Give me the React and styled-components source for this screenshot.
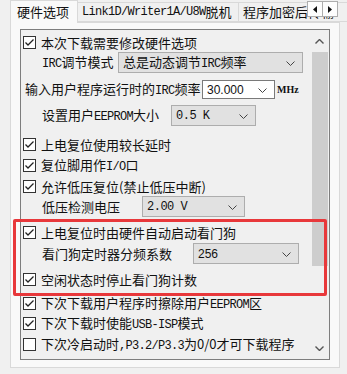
import React from "react";
import styled, { createGlobalStyle } from "styled-components";

const GlobalStyle = createGlobalStyle`
  html, body { margin: 0; padding: 0; background: #f0f0f0; }
  * { box-sizing: border-box; }
`;

const FONT = `"Noto Sans CJK SC", "Liberation Serif", sans-serif`;

const Root = styled.div`
  position: relative;
  width: 347px;
  height: 374px;
  overflow: hidden;
  background: #f0f0f0;
  font-family: ${FONT};
  font-size: 13px;
  color: #111;
`;

/* half-width Latin run, like the bitmap font's Latin glyphs */
const L = styled.span`
  font-family: "Liberation Mono", monospace;
  font-size: 12px;
  letter-spacing: -0.7px;
`;

const TabStrip = styled.div`
  position: relative;
  display: flex;
  align-items: flex-end;
  height: 22px;
  padding-left: 10px;
  white-space: nowrap;
`;

const Tab = styled.div`
  position: relative;
  flex-shrink: 0;
  height: ${(p) => (p.$active ? 23 : 20)}px;
  margin-bottom: ${(p) => (p.$active ? -1 : 0)}px;
  width: ${(p) => p.$w}px;
  margin-left: ${(p) => (p.$first ? 0 : -1)}px;
  padding-left: ${(p) => p.$pad}px;
  padding-bottom: ${(p) => (p.$active ? 1 : 0)}px;
  display: flex;
  align-items: center;
  border: 1px solid #d9d9d9;
  border-bottom: ${(p) => (p.$active ? "none" : "1px solid #d9d9d9")};
  background: ${(p) => (p.$active ? "#f9f9f9" : "#f0f0f0")};
  z-index: ${(p) => (p.$active ? 2 : 1)};
  line-height: 16px;
  overflow: hidden;
`;

const TabScroller = styled.div`
  position: absolute;
  right: 9px;
  top: 1px;
  display: flex;
  z-index: 3;
`;

const ScrollBtn = styled.div`
  width: 16px;
  height: 16px;
  margin-left: -1px;
  border: 1px solid #adadad;
  background: #fdfdfd;
  display: flex;
  align-items: center;
  justify-content: center;
`;

const TabPage = styled.div`
  position: relative;
  z-index: 1;
  margin-left: 10px;
  width: 330px;
  height: 346px;
  border: 1px solid #d9d9d9;
  background: #f9f9f9;
  padding: 6px 0 0 9px;
`;

const ListBox = styled.div`
  display: flex;
  width: 310px;
  height: 331px;
  border: 1px solid #7d7d7d;
  background: #f0f0f0;
  overflow: hidden;
`;

const Content = styled.div`
  flex: 1;
  min-width: 0;
  padding-top: 2px;
  display: flex;
  flex-direction: column;
`;

const Row = styled.div`
  display: flex;
  align-items: center;
  flex-shrink: 0;
  height: ${(p) => p.$h || 20}px;
  margin-top: ${(p) => p.$mt || 0}px;
  padding-left: ${(p) => p.$indent || 0}px;
  white-space: nowrap;
`;

const Box = styled.span`
  width: 13px;
  height: 13px;
  flex-shrink: 0;
  border: 1px solid #333;
  background: #fff;
  display: flex;
  align-items: center;
  justify-content: center;
  margin-right: 5px;
`;

const Label = styled.span`
  flex-shrink: 0;
  width: ${(p) => (p.$w ? `${p.$w}px` : "auto")};
  line-height: 20px;
  padding-top: 1px;
`;

const Select = styled.div`
  flex-shrink: 0;
  position: relative;
  display: flex;
  align-items: center;
  width: ${(p) => p.$w}px;
  height: ${(p) => p.$h || 21}px;
  padding-left: 4px;
  border: 1px solid ${(p) => (p.$edit ? "#7a7a7a" : "#adadad")};
  background: ${(p) => (p.$edit ? "#ffffff" : "#e1e1e1")};
  font-family: ${(p) =>
    p.$kind === "mono"
      ? `"Liberation Mono", monospace`
      : p.$kind === "sans"
      ? `"Liberation Sans", Arial, sans-serif`
      : FONT};
  font-size: ${(p) => (p.$kind === "mono" || p.$kind === "sans" ? 12 : 13)}px;
  letter-spacing: ${(p) => (p.$kind === "mono" ? "-0.5px" : "0")};
  line-height: 18px;
`;

const Chevron = styled.svg`
  position: absolute;
  right: 7px;
  top: 50%;
  margin-top: -2px;
`;

const Unit = styled.span`
  margin-left: 2px;
  font-family: "Liberation Serif", serif;
  font-weight: bold;
  font-size: 10px;
`;

const Scrollbar = styled.div`
  width: 19px;
  flex-shrink: 0;
  display: flex;
  flex-direction: column;
  align-items: center;
  background: #f0f0f0;
`;

const ScrollArrow = styled.div`
  height: ${(p) => p.$h}px;
  width: 100%;
  display: flex;
  align-items: center;
  justify-content: center;
`;

const Thumb = styled.div`
  width: 16px;
  height: 214px;
  background: #cdcdcd;
`;

const Spacer = styled.div`
  flex: 1;
`;

const Highlight = styled.div`
  position: absolute;
  left: 13px;
  top: 219px;
  width: 314px;
  height: 77px;
  border: 3px solid #e8383b;
  border-radius: 2px;
  z-index: 5;
  pointer-events: none;
`;

const Check = ({ checked }) => (
  <Box>
    {checked && (
      <svg width="11" height="11" viewBox="0 0 11 11">
        <path d="M1.5 5.5 L4 8 L9.5 2.5" fill="none" stroke="#222" strokeWidth="1.3" />
      </svg>
    )}
  </Box>
);

const Down = () => (
  <Chevron width="9" height="5" viewBox="0 0 9 5">
    <path d="M0.5 0.5 L4.5 4.5 L8.5 0.5" fill="none" stroke="#444" strokeWidth="1" />
  </Chevron>
);

const CheckRow = ({ checked = true, mt, children }) => (
  <Row $mt={mt} $indent={2}>
    <Check checked={checked} />
    <Label>{children}</Label>
  </Row>
);

export default function App() {
  return (
    <Root>
      <GlobalStyle />
      <TabStrip>
        <Tab $active $first $w={68} $pad={6}>硬件选项</Tab>
        <Tab $w={162} $pad={4}>
          <L>Link1D/Writer1A/U8W</L>脱机
        </Tab>
        <Tab $w={110} $pad={4}>程序加密后传输</Tab>
        <TabScroller>
          <ScrollBtn>
            <svg width="4" height="7" viewBox="0 0 4 7">
              <path d="M4 0 L0 3.5 L4 7 Z" fill="#111" />
            </svg>
          </ScrollBtn>
          <ScrollBtn>
            <svg width="4" height="7" viewBox="0 0 4 7">
              <path d="M0 0 L4 3.5 L0 7 Z" fill="#111" />
            </svg>
          </ScrollBtn>
        </TabScroller>
      </TabStrip>
      <TabPage>
        <ListBox>
          <Content>
            <CheckRow>本次下载需要修改硬件选项</CheckRow>
            <Row $h={21} $indent={21}>
              <Label $w={76}>
                <L>IRC</L>调节模式
              </Label>
              <Select $w={185}>
                <span>
                  总是动态调节<L>IRC</L>频率
                </span>
                <Down />
              </Select>
            </Row>
            <Row $h={19} $mt={7} $indent={4}>
              <Label $w={177}>
                输入用户程序运行时的<L>IRC</L>频率
              </Label>
              <Select $w={73} $h={19} $edit $kind="sans">
                30.000
                <Down />
              </Select>
              <Unit>MHz</Unit>
            </Row>
            <Row $h={21} $mt={6} $indent={21}>
              <Label $w={129}>
                设置用户<L>EEPROM</L>大小
              </Label>
              <Select $w={85} $kind="mono">
                0.5 K
                <Down />
              </Select>
            </Row>
            <CheckRow mt={8}>上电复位使用较长延时</CheckRow>
            <CheckRow mt={1}>
              复位脚用作<L>I/O</L>口
            </CheckRow>
            <CheckRow mt={1}>允许低压复位(禁止低压中断)</CheckRow>
            <Row $h={21} $indent={21}>
              <Label $w={100}>低压检测电压</Label>
              <Select $w={103} $kind="mono">
                2.00 V
                <Down />
              </Select>
            </Row>
            <CheckRow mt={5}>上电复位时由硬件自动启动看门狗</CheckRow>
            <Row $h={21} $mt={1} $indent={21}>
              <Label $w={151}>看门狗定时器分频系数</Label>
              <Select $w={106} $kind="sans">
                256
                <Down />
              </Select>
            </Row>
            <CheckRow mt={5}>空闲状态时停止看门狗计数</CheckRow>
            <CheckRow mt={4}>
              下次下载用户程序时擦除用户<L>EEPROM</L>区
            </CheckRow>
            <CheckRow mt={0}>
              下次下载时使能<L>USB-ISP</L>模式
            </CheckRow>
            <CheckRow checked={false} mt={1}>
              下次冷启动时<L>,P3.2/P3.3</L>为0/0才可下载程序
            </CheckRow>
          </Content>
          <Scrollbar>
            <ScrollArrow $h={22}>
              <svg width="9" height="5" viewBox="0 0 9 5">
                <path d="M0.5 4.5 L4.5 0.5 L8.5 4.5" fill="none" stroke="#555" strokeWidth="1.4" />
              </svg>
            </ScrollArrow>
            <Thumb />
            <Spacer />
            <ScrollArrow $h={22}>
              <svg width="9" height="5" viewBox="0 0 9 5">
                <path d="M0.5 0.5 L4.5 4.5 L8.5 0.5" fill="none" stroke="#555" strokeWidth="1.4" />
              </svg>
            </ScrollArrow>
          </Scrollbar>
        </ListBox>
      </TabPage>
      <Highlight />
    </Root>
  );
}
